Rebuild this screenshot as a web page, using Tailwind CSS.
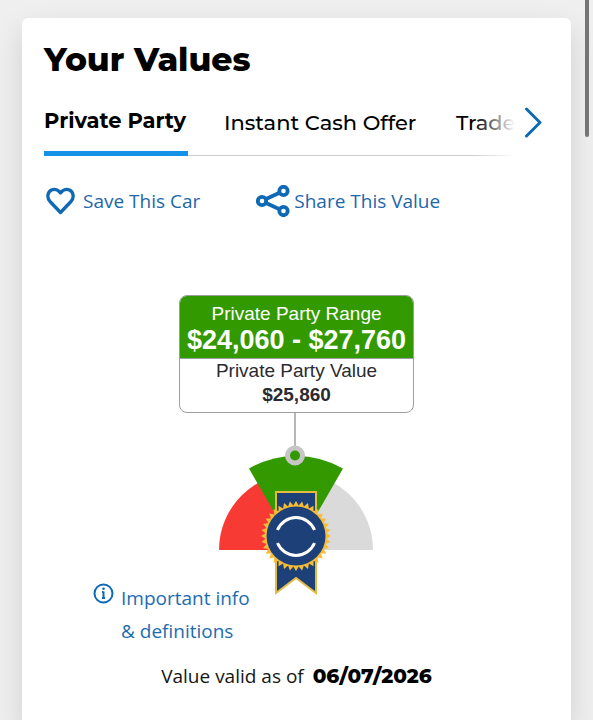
<!DOCTYPE html>
<html lang="en">
<head>
  <meta charset="UTF-8">
  <meta name="viewport" content="width=device-width, initial-scale=1">
  <title>Your Values</title>
  <script src="https://cdn.jsdelivr.net/npm/@tailwindcss/browser@4"></script>
</head>
<body class="relative min-h-screen bg-[#efefef] px-[22px] pt-[18px] font-['Open_Sans',sans-serif] overflow-x-hidden">
  <main class="min-h-[calc(100vh-18px)] rounded-t-md bg-white px-[22px] pt-5 pb-8 shadow-[0_12px_30px_rgba(0,0,0,0.13)]">
    <h1 class="font-['Montserrat','Inter',sans-serif] text-[33px] leading-[42px] font-extrabold text-black">Your Values</h1>

    <!-- tabs -->
    <nav class="mt-4 flex">
      <div class="relative flex h-[60px] flex-1 overflow-hidden whitespace-nowrap font-['Montserrat','Inter',sans-serif] text-[21px] leading-[26px] text-black" role="tablist">
        <div class="absolute inset-x-0 bottom-0 h-px bg-[#cfcfcf]"></div>
        <button role="tab" aria-selected="true" class="relative mr-9 flex w-[144px] shrink-0 items-start border-b-[5px] border-[#1492e6] pt-3 font-bold">Private Party</button>
        <button role="tab" class="mr-[38px] flex w-[194px] shrink-0 items-start pt-[14px] font-medium">Instant Cash Offer</button>
        <button role="tab" class="flex shrink-0 items-start pt-[14px] font-medium">Trade</button>
        <div class="absolute inset-y-0 right-0 w-10 bg-linear-to-r from-white/0 to-white"></div>
      </div>
      <button class="flex w-[34px] items-start pt-[10px] pl-2" aria-label="Next tab">
        <svg class="h-8 w-5" viewBox="0 0 20 32" fill="none" stroke="#0f69b4" stroke-width="3" stroke-linecap="round" stroke-linejoin="round"><path d="M3.500 3 L17 16.500 L3.500 30"/></svg>
      </button>
    </nav>

    <!-- actions -->
    <div class="mt-[27px] flex h-9 items-center gap-14 text-[19px] leading-7 text-[#1d67ab]">
      <button class="flex items-center gap-2">
        <svg class="ml-0.5 h-7 w-[29px]" viewBox="0 0 29 28" fill="none" stroke="#0f69b4" stroke-width="3.300" stroke-linejoin="round"><path d="M14.500 25.500 L4 14.500 C0.500 10.500 1.500 5 5.500 3 C9 1.500 12.500 3 14.500 6 C16.500 3 20 1.500 23.500 3 C27.500 5 28.500 10.500 25 14.500 Z"/></svg>
        Save This Car
      </button>
      <button class="flex items-center gap-1">
        <svg class="h-8 w-[34px]" viewBox="0 0 34 32" fill="none" stroke="#0f69b4" stroke-width="3.800"><path d="M10 14 L23 8 M10 18 L23 24"/><circle cx="6" cy="16" r="4.200"/><circle cx="27.500" cy="6" r="4.200"/><circle cx="27.500" cy="26" r="4.200"/></svg>
        Share This Value
      </button>
    </div>

    <!-- value callout -->
    <section class="mt-[76px] flex flex-col items-center font-['Liberation_Sans',sans-serif]">
      <div class="w-[235px] overflow-hidden rounded-lg border border-[#9b9fa3] text-center">
        <div class="h-[63px] border-b border-[#9b9fa3] bg-[#339900] pt-[6px] text-white">
          <p class="text-[19px] leading-6">Private Party Range</p>
          <p class="text-[27px] leading-7 font-bold whitespace-nowrap">$24,060 - $27,760</p>
        </div>
        <div class="h-[53px] text-[#2b2b2f]">
          <p class="text-[19px] leading-6">Private Party Value</p>
          <p class="text-[19px] leading-6 font-bold">$25,860</p>
        </div>
      </div>

      <!-- gauge -->
      <svg class="h-[182px] w-[159px]" viewBox="0 0 159 182">
        <path d="M79 137 H2 A77 77 0 0 1 79 60 Z" fill="#f73b34"/>
        <path d="M79 137 V60 A77 77 0 0 1 156 137 Z" fill="#dadada"/>
        <path d="M79 137 L32 55.500 A94 94 0 0 1 126 55.500 Z" fill="#339900"/>
        <path d="M78 0 V36" stroke="#9da1a5" stroke-width="1.500"/>
        <circle cx="78" cy="42.500" r="7.500" fill="#339900" stroke="#c6c6c6" stroke-width="5"/>
        <path d="M59 79 H99 V180 L79 165 L59 180 Z" fill="#1d4078" stroke="#e3bc3f" stroke-width="2"/>
        <polygon id="seal" fill="#f6bc36"/>
        <circle cx="79" cy="123" r="29.500" fill="#1d4078"/>
        <path d="M60.500 117 A20 20 0 0 1 97.500 117 M60.500 130 A20 20 0 0 0 97.500 130" fill="none" stroke="#fff" stroke-width="3"/>
      </svg>
    </section>

    <a href="#" class="-mt-[13px] ml-[49px] flex w-fit items-start gap-[7px] text-[19px] leading-[33px] text-[#1d6caf]">
      <svg class="mt-px h-[21px] w-[21px]" viewBox="0 0 21 21" fill="none" stroke="#0f69b4" stroke-width="2"><circle cx="10.500" cy="10.500" r="9"/><path d="M10.500 8.500 V15.500 M9 9 H10.500 M9 15 H12"/><circle cx="10.500" cy="5.800" r="1.300" fill="#0f69b4" stroke="none"/></svg>
      <span>Important info<br>&amp; definitions</span>
    </a>

    <p class="mt-3 text-center text-[19px] leading-8 text-[#151515]">Value valid as of <strong class="ml-1 font-['Montserrat','Inter',sans-serif] text-[20px] font-extrabold text-black">06/07/2026</strong></p>
  </main>

  <div class="absolute top-0 right-1 h-[137px] w-1 rounded-b-full bg-[#757575]"></div>

  <script>
    // toothed edge of the seal
    const teeth = 36;
    const points = [];
    for (let i = 0; i < teeth * 2; i++) {
      const r = i % 2 ? 30.5 : 35;
      const a = Math.PI * i / teeth - Math.PI / 2;
      points.push((79 + r * Math.cos(a)).toFixed(1) + ',' + (123 + r * Math.sin(a)).toFixed(1));
    }
    document.getElementById('seal').setAttribute('points', points.join(' '));
  </script>
</body>
</html>
